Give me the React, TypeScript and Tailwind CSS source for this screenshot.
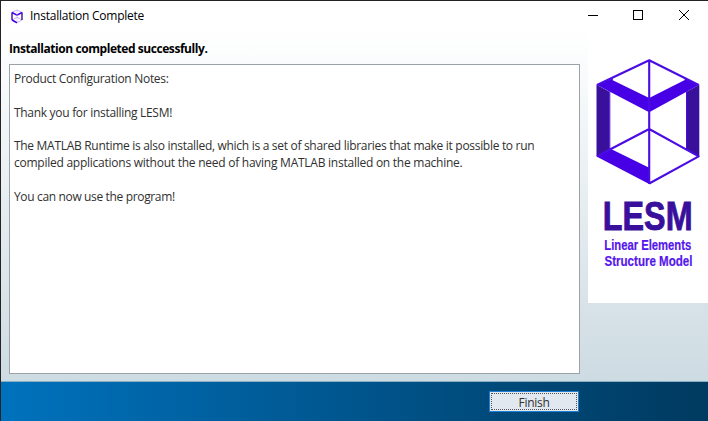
const font = "font-['Open_Sans','Noto_Sans',sans-serif]";

function CubeMark() {
  return (
    <svg width="120" height="272" viewBox="588 31 120 272" className="block">
      <g transform="translate(-.5 0)">
        <path d="M597 84.7 610 91.7V149L597 156.5ZM699.8 84.7 687 91.7V149L699.8 156.5Z" fill="#38109c" />
        <path d="M597 84.7 613.3 78.5V80.3L649.7 98 685.3 80V78.5L699.8 84.7 649.7 112.2ZM597 156.5 611.5 149 649.7 167.7V184Z" fill="#4700e6" />
        <g fill="none" stroke="#4a0be4" strokeWidth="2.1" strokeLinejoin="round">
          <path d="M597.5 85 649.7 60.3 699.2 85M649.7 60.3V184M597.5 156.3 649.7 129 699.2 156.3 649.7 183.5" />
          <path d="M610.3 91.5V149M687 91.5V149" strokeWidth="1" />
        </g>
      </g>
      <g fontFamily="'Liberation Sans', Arial, sans-serif" fontWeight="700">
        <text transform="translate(602.8 230) scale(.788 1)" fontSize="41" fill="#38109c" stroke="#38109c" strokeWidth=".9">LESM</text>
        <g fill="#5516ee" stroke="#5516ee" strokeWidth=".2" fontSize="14.5">
          <text transform="translate(604.3 250) scale(.777 1)">Linear Elements</text>
          <text transform="translate(604.5 266.3) scale(.797 1)">Structure Model</text>
        </g>
      </g>
    </svg>
  );
}

export default function App() {
  return (
    <div className={`flex h-[421px] w-[708px] flex-col overflow-hidden border-t border-l border-[#242224] bg-white text-xs text-[#303030] ${font}`}>
      <header className="flex h-[30px] shrink-0 items-center bg-white pl-[9px] text-black">
        <svg width="14" height="15" viewBox="0 0 14 15" fill="none" className="shrink-0">
          <path d="M1.7 3.5 7 1 12.3 3.5M2 11 7 8.3 12 11 7 13.7" stroke="#b39af0" strokeWidth=".8" />
          <path d="M2 3.5V11M12 3.5V11" stroke="#38109c" strokeWidth="1.4" />
          <path d="M2 3.5 7 6.2 12 3.5M2 11 7 13.7" stroke="#4700e6" strokeWidth="1.6" />
          <path d="M7 1V13" stroke="#cdbdf5" strokeWidth=".6" />
        </svg>
        <h1 className="ml-1.5 flex-1 tracking-[-0.24px] whitespace-nowrap">Installation Complete</h1>
        <svg width="122" height="30" viewBox="580 1 122 30" fill="none" stroke="#000" className="mr-1.5" shapeRendering="crispEdges">
          <path d="M588 15.5H598" />
          <rect x="633.5" y="10.5" width="9" height="9" />
          <path d="M679 10 689 20M689 10 679 20" shapeRendering="auto" />
        </svg>
      </header>
      <div className="flex h-[350px] shrink-0 bg-linear-to-b from-white to-[#cddbe2]">
        <main className="flex w-[587px] flex-col pl-2">
          <h2 className="h-[33px] pt-2 font-bold leading-5 tracking-[-0.44px] whitespace-nowrap text-black">Installation completed successfully.</h2>
          <section className="h-[310px] w-[571px] border border-[#9ba3a9] bg-white pt-1.5 pl-1 leading-[16.8px] tracking-[-0.3px] whitespace-nowrap">
            <p>Product Configuration Notes:</p>
            <p className="mt-[16.8px]">Thank you for installing LESM!</p>
            <p className="mt-[16.8px]">The MATLAB Runtime is also installed, which is a set of shared libraries that make it possible to run</p>
            <p className="tracking-[-0.25px]">compiled applications without the need of having MATLAB installed on the machine.</p>
            <p className="mt-[16.8px] tracking-[-0.35px]">You can now use the program!</p>
          </section>
        </main>
        <aside className="h-[272px] w-[120px] bg-white"><CubeMark /></aside>
      </div>
      <footer className="flex flex-1 justify-end border-t border-[#8aaec2] bg-linear-to-r from-[#0072bd] to-[#003a60] pt-[9px] pr-[129px]">
        <button className="h-[21px] w-[90px] border border-[#1c7fd6] bg-[#e1e8ef] p-px">
          <span className="flex h-full items-center justify-center border border-dotted border-[#555] pt-0.5 tracking-[-0.3px]">Finish</span>
        </button>
      </footer>
    </div>
  );
}
